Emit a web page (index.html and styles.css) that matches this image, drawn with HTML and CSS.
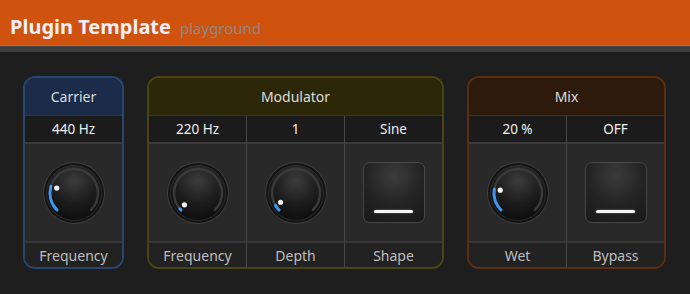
FILE: index.html
```html
<!DOCTYPE html>
<html>
<head>
<meta name="viewport" content="width=device-width, initial-scale=1.0">
<link rel="stylesheet" href="styles.css">
<title>Plugin Template</title>
</head>
<body>

  <!-- shared gradients for knobs -->
  <svg class="defs" width="0" height="0">
    <defs>
      <radialGradient id="face" cx="50%" cy="28%" r="75%">
        <stop offset="0%" stop-color="#3c3c3c"/>
        <stop offset="55%" stop-color="#1c1c1c"/>
        <stop offset="100%" stop-color="#0c0c0c"/>
      </radialGradient>
    </defs>
  </svg>

  <!-- Title bar -->
  <header class="topbar">
    <span class="title">Plugin Template</span>
    <span class="sub">playground</span>
  </header>
  <div class="strip"></div>

  <div class="rack">

    <section class="group carrier">
      <div class="group-head">Carrier</div>
      <div class="cells">
        <div class="cell">
          <div class="value">440 Hz</div>
          <div class="control">
            <svg class="knob" width="64" height="64" viewBox="0 0 64 64">
              <circle cx="32" cy="32" r="30.5" fill="#141414" stroke="#404040"/>
              <circle cx="32" cy="32" r="27.5" fill="url(#face)" stroke="#2c2c2c"/>
              <path d="M15.03 48.97 A24 24 0 1 1 48.97 48.97" class="track"/>
              <path d="M15.03 48.97 A24 24 0 0 1 8.93 25.39" class="arc"/>
              <circle cx="14.70" cy="27.04" r="2.6" fill="#f2f2f2"/>
            </svg>
          </div>
          <div class="label">Frequency</div>
        </div>
      </div>
    </section>

    <section class="group modulator">
      <div class="group-head">Modulator</div>
      <div class="cells">
        <div class="cell">
          <div class="value">220 Hz</div>
          <div class="control">
            <svg class="knob" width="64" height="64" viewBox="0 0 64 64">
              <circle cx="32" cy="32" r="30.5" fill="#141414" stroke="#404040"/>
              <circle cx="32" cy="32" r="27.5" fill="url(#face)" stroke="#2c2c2c"/>
              <path d="M15.03 48.97 A24 24 0 1 1 48.97 48.97" class="track"/>
              <path d="M15.03 48.97 A24 24 0 0 1 13.89 47.75" class="arc"/>
              <circle cx="18.42" cy="43.81" r="2.6" fill="#f2f2f2"/>
            </svg>
          </div>
          <div class="label">Frequency</div>
        </div>
        <div class="cell">
          <div class="value">1</div>
          <div class="control">
            <svg class="knob" width="64" height="64" viewBox="0 0 64 64">
              <circle cx="32" cy="32" r="30.5" fill="#141414" stroke="#404040"/>
              <circle cx="32" cy="32" r="27.5" fill="url(#face)" stroke="#2c2c2c"/>
              <path d="M15.03 48.97 A24 24 0 1 1 48.97 48.97" class="track"/>
              <path d="M15.03 48.97 A24 24 0 0 1 11.43 44.36" class="arc"/>
              <circle cx="16.57" cy="41.27" r="2.6" fill="#f2f2f2"/>
            </svg>
          </div>
          <div class="label">Depth</div>
        </div>
        <div class="cell">
          <div class="value">Sine</div>
          <div class="control">
            <div class="toggle"><span class="bar"></span></div>
          </div>
          <div class="label">Shape</div>
        </div>
      </div>
    </section>

    <section class="group mix">
      <div class="group-head">Mix</div>
      <div class="cells">
        <div class="cell">
          <div class="value">20 %</div>
          <div class="control">
            <svg class="knob" width="64" height="64" viewBox="0 0 64 64">
              <circle cx="32" cy="32" r="30.5" fill="#141414" stroke="#404040"/>
              <circle cx="32" cy="32" r="27.5" fill="url(#face)" stroke="#2c2c2c"/>
              <path d="M15.03 48.97 A24 24 0 1 1 48.97 48.97" class="track"/>
              <path d="M15.03 48.97 A24 24 0 0 1 8.30 28.25" class="arc"/>
              <circle cx="14.22" cy="29.18" r="2.6" fill="#f2f2f2"/>
            </svg>
          </div>
          <div class="label">Wet</div>
        </div>
        <div class="cell">
          <div class="value">OFF</div>
          <div class="control">
            <div class="toggle"><span class="bar"></span></div>
          </div>
          <div class="label">Bypass</div>
        </div>
      </div>
    </section>

  </div>

</body>
</html>
```

FILE: styles.css
```css
* {
  box-sizing: border-box;
}

body {
  margin: 0;
  background-color: #1e1e1e;
  font-family: "Noto Sans", "Open Sans", sans-serif;
}

.defs {
  position: absolute;
}

/* title bar */
.topbar {
  height: 46px;
  background-color: #cf530e;
  border-bottom: 1px solid #dc6420;
  padding: 13px 10px 0;
  display: flex;
  align-items: baseline;
  gap: 9px;
}

.title {
  color: #f1eff8;
  font-size: 20px;
  font-weight: bold;
}

.sub {
  color: #8f8784;
  font-size: 15px;
}

.strip {
  height: 6px;
  background-color: #3d3d3d;
  border-top: 1px solid #474747;
}

/* panels */
.rack {
  display: flex;
  gap: 23px;
  padding: 24px 24px 0 23px;
}

.group {
  flex-shrink: 0;
  border: 2px solid;
  border-radius: 12px;
  overflow: hidden;
  background-color: #222222;
}

.group-head {
  height: 38px;
  display: flex;
  align-items: center;
  justify-content: center;
  font-size: 14px;
  color: #dcdcdc;
  border-bottom: 1px solid #333333;
}

.carrier {
  border-color: #28456d;
}
.carrier .group-head {
  background-color: #1a2c49;
}

.modulator {
  border-color: #4a4313;
}
.modulator .group-head {
  background-color: #2d2709;
}

.mix {
  border-color: #5a2e12;
}
.mix .group-head {
  background-color: #2d1a0b;
}

.cells {
  display: flex;
}

.cell {
  flex: 0 0 97px;
  display: flex;
  flex-direction: column;
}

.cell + .cell {
  flex-basis: 98px;
  border-left: 1px solid #474747;
}

.value {
  height: 28px;
  background-color: #1b1b1b;
  border-bottom: 2px solid #3a3a3a;
  color: #f0f0f0;
  font-size: 13.5px;
  display: flex;
  align-items: center;
  justify-content: center;
}

.control {
  height: 99px;
  background-color: #292929;
  border-bottom: 2px solid #363636;
  display: flex;
  align-items: center;
  justify-content: center;
}

.label {
  height: 24px;
  background-color: #222222;
  color: #bdbdbd;
  font-size: 14px;
  display: flex;
  align-items: center;
  justify-content: center;
}

/* knob */
.knob .track {
  fill: none;
  stroke: #3a3a3a;
  stroke-width: 2.5;
  stroke-linecap: round;
}

.knob .arc {
  fill: none;
  stroke: #3b98f2;
  stroke-width: 3;
  stroke-linecap: round;
}

/* square toggle button */
.toggle {
  width: 62px;
  height: 61px;
  border: 1px solid #474747;
  border-radius: 7px;
  background: radial-gradient(circle at 50% 22%, #3c3c3c 0%, #222222 55%, #191919 100%);
  display: flex;
  align-items: flex-end;
  justify-content: center;
  padding-bottom: 9px;
}

.bar {
  width: 39px;
  height: 3px;
  border-radius: 2px;
  background-color: #f5f5f5;
  box-shadow: 0 0 2px rgba(255, 255, 255, 0.4);
}
```
